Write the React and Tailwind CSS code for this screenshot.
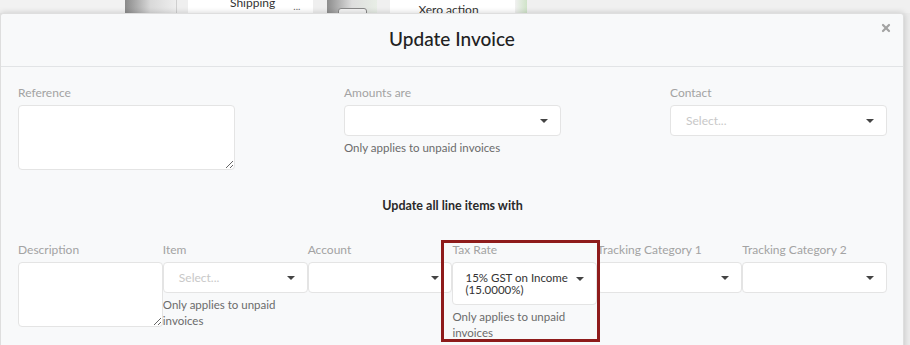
import { X } from "lucide-react";

const font = { fontFamily: "'Lato', 'Noto Sans', sans-serif" };

function Caret() {
  return (
    <span className="block w-0 h-0 border-l-[4px] border-r-[4px] border-t-[4px] border-l-transparent border-r-transparent border-t-[#444]" />
  );
}

function Label({ children }) {
  return <div className="text-[12px] leading-[16px] text-[#a3a3a3] mb-[4px] whitespace-nowrap">{children}</div>;
}

function Help({ children }) {
  return <div className="text-[11.5px] leading-[16px] text-[#6b6b6b] mt-[4px]">{children}</div>;
}

function Select({ placeholder }) {
  return (
    <div className="h-[31px] bg-white border border-[#e4e4e4] rounded-[4px] flex items-center justify-between pl-[15px] pr-[12px]">
      <span className="text-[12px] text-[#c8c8c8]">{placeholder}</span>
      <Caret />
    </div>
  );
}

function Textarea({ className }) {
  return (
    <textarea
      className={`block bg-white border border-[#e4e4e4] rounded-[4px] outline-none ${className}`}
    />
  );
}

export default function App() {
  return (
    <div className="relative w-[910px] h-[345px] overflow-hidden bg-[#ebebeb]" style={font}>
      {/* page behind the modal */}
      <div className="flex h-[13px] items-start">
        <div className="w-[125px] h-full bg-[#f2f2f2]" />
        <div className="w-[52px] h-full bg-gradient-to-r from-[#8a8a8a] via-[#d9d9d9] to-[#eeeeee] border-r border-[#cfcfcf]" />
        <div className="w-[11px] h-full bg-[#efefef]" />
        <div className="w-[125px] h-full bg-white flex items-start pl-[42px] gap-[18px]">
          <span className="text-[12px] leading-[10px] -mt-[2px] text-[#333]">Shipping</span>
          <span className="text-[10px] leading-[10px] mt-[1px] text-[#666]">...</span>
        </div>
        <div className="w-[14px] h-full bg-[#efefef]" />
        <div className="w-[50px] h-full bg-gradient-to-r from-[#8d8d8d] via-[#dedede] to-[#e8eee6] relative">
          <div className="absolute left-[11px] top-[8px] w-[29px] h-[10px] border border-[#888] rounded-[3px] bg-[#f4f4f4]" />
        </div>
        <div className="w-[13px] h-full bg-[#f0f0f0]" />
        <div className="w-[125px] h-full bg-white flex justify-center pt-[4px]">
          <span className="text-[12px] leading-[12px] text-[#333] -ml-[8px]">Xero action</span>
        </div>
        <div className="w-[12px] h-full bg-gradient-to-r from-[#f1f1f1] to-[#cfe3c8]" />
        <div className="flex-1 h-full bg-[#f0f0f0]" />
      </div>

      {/* modal */}
      <div className="absolute left-0 top-[13px] w-[904px] h-[340px] bg-[#f8f9fa] border border-[#dedede] rounded-[3px] shadow-[0_0_6px_rgba(0,0,0,0.18)]">
        <div className="relative h-[53px] border-b border-[#e2e4e6] flex items-center justify-center">
          <h1 className="text-[19px] font-medium text-[#222] -mt-[1px]">Update Invoice</h1>
          <X className="absolute right-[11px] top-[8px] text-[#a3a3a3]" size={12} strokeWidth={4.5} />
        </div>

        <div className="pl-[17px] pr-[16px] pt-[18px]">
          <div className="flex justify-between">
            <div className="w-[217px]">
              <Label>Reference</Label>
              <Textarea className="w-[217px] h-[65px]" />
            </div>
            <div className="w-[217px]">
              <Label>Amounts are</Label>
              <Select placeholder="" />
              <Help>Only applies to unpaid invoices</Help>
            </div>
            <div className="w-[217px]">
              <Label>Contact</Label>
              <Select placeholder="Select..." />
            </div>
          </div>

          <div className="mt-[28px] text-center text-[12.5px] leading-[16px] font-bold text-[#2a2a2a]">
            Update all line items with
          </div>

          <div className="grid grid-cols-6 mt-[28px]">
            <div>
              <Label>Description</Label>
              <Textarea className="w-full h-[65px]" />
            </div>
            <div>
              <Label>Item</Label>
              <Select placeholder="Select..." />
              <Help>Only applies to unpaid invoices</Help>
            </div>
            <div>
              <Label>Account</Label>
              <Select placeholder="" />
            </div>
            <div>
              <Label>Tax Rate</Label>
              <div className="h-[43px] bg-white border border-[#e4e4e4] rounded-[4px] flex items-start justify-between pl-[12px] pr-[12px] pt-[9px]">
                <span className="text-[11.5px] leading-[12px] text-[#333]">
                  15% GST on Income
                  <br />
                  (15.0000%)
                </span>
                <span className="mt-[5px]">
                  <Caret />
                </span>
              </div>
              <Help>Only applies to unpaid invoices</Help>
            </div>
            <div>
              <Label>Tracking Category 1</Label>
              <Select placeholder="" />
            </div>
            <div>
              <Label>Tracking Category 2</Label>
              <Select placeholder="" />
            </div>
          </div>
        </div>
      </div>

      {/* highlight */}
      <div className="absolute left-[441px] top-[240px] w-[159px] h-[102px] border-[3px] border-[#8e1b1b]" />
    </div>
  );
}
